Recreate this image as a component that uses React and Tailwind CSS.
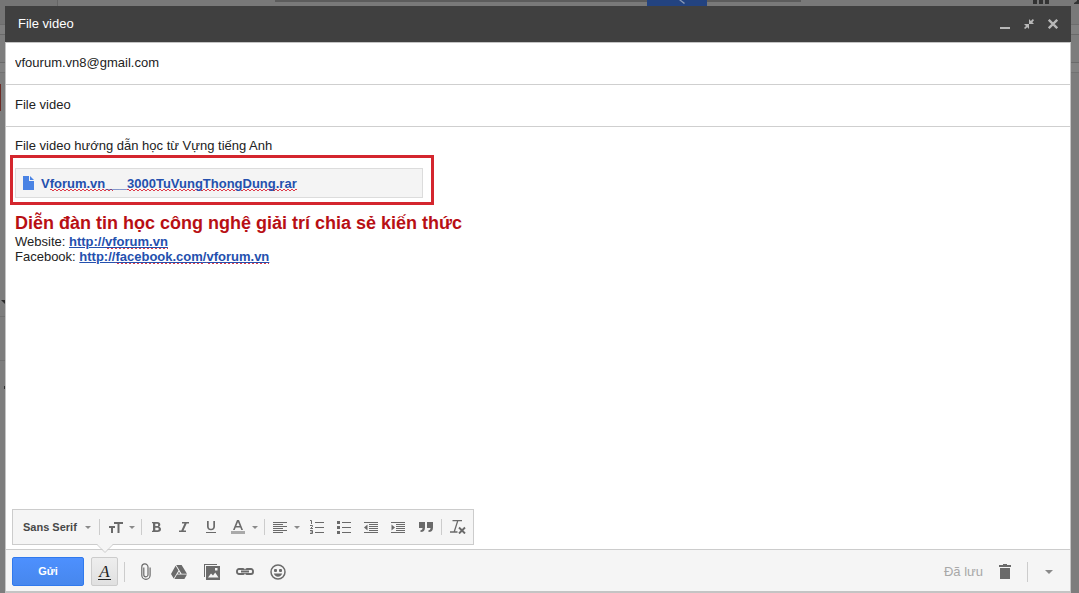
import React from "react";

const squiggle =
  "[background-image:linear-gradient(90deg,#dc3a4a_50%,transparent_50%),linear-gradient(90deg,transparent_50%,#dc3a4a_50%)] [background-size:4px_1px,4px_1px] [background-position:0_13px,0_14px] [background-repeat:repeat-x]";

function Svg({ w, h, children, className = "" }) {
  return (
    <svg
      width={w}
      height={h}
      viewBox={`0 0 ${w} ${h}`}
      fill="currentColor"
      aria-hidden="true"
      className={`block shrink-0 ${className}`}
    >
      {children}
    </svg>
  );
}

const Caret = () => (
  <Svg w={6} h={3} className="text-[#8a8a8a]">
    <path d="M0 0h6L3 3z" />
  </Svg>
);

const Lines = ({ rows }) =>
  rows.map(([x, y, w], i) => <rect key={i} x={x} y={y} width={w} height="1" />);

const Separator = () => <span className="h-4 w-px shrink-0 bg-[#cccccc]" />;

function Tool({ label, className = "w-[27px] justify-center", children }) {
  return (
    <button type="button" aria-label={label} className={`flex h-8 shrink-0 items-center ${className}`}>
      {children}
    </button>
  );
}

function PageBehind() {
  return (
    <div className="absolute inset-0 overflow-hidden bg-[#7d7d7d]" aria-hidden="true">
      <div className="h-[25px] border-b border-[#6d6d6d] bg-[#797979]">
        <div className="h-full w-[58px] border-r border-[#666666] bg-[#757575]" />
      </div>
      <div className="h-[10px] border-b border-[#6a6a6a] bg-[#808080]" />
      <div className="h-[28px] border-b border-[#6a6a6a]" />
      <div className="h-[10px] border-b border-[#727272] bg-[#828282]" />
      <div className="mt-[11px] h-[27px] w-px bg-[#6b2a25]" />
      <div className="mt-[205px] h-[45px] w-[5px] border-y border-[#707070]" />
      <div className="absolute left-[275px] top-0 h-[2px] w-[526px] bg-[#5c5c5c]" />
      <div className="absolute left-[647px] top-0 h-[6px] w-[60px] bg-[#234380]">
        <Svg w={6} h={4} className="ml-8 text-[#8b9ab5]">
          <path d="M0 0h2l4 3-1 1z" />
        </Svg>
      </div>
      <div className="absolute right-[30px] top-0 flex gap-[2px]">
        <i className="size-1 bg-[#333333]" />
        <i className="size-1 bg-[#333333]" />
        <i className="size-1 bg-[#333333]" />
      </div>
      <Svg w={5} h={4} className="absolute right-0 top-0 text-[#333333]">
        <path d="M0 4V3l3-2V0h2v4z" />
      </Svg>
      <Svg w={4} h={4} className="absolute left-[1px] top-[300px] text-[#2c2c2c]">
        <path d="M0 0h4v4z" />
      </Svg>
      <Svg w={1} h={3} className="absolute left-[4px] top-[386px] text-[#2c2c2c]">
        <path d="M0 0h1v3H0z" />
      </Svg>
    </div>
  );
}

function TitleBar() {
  return (
    <header className="flex h-9 items-center bg-[#404040] pl-[13px] pr-[6px] text-[#b8b8b8]">
      <h1 className="flex-1 text-[13px] text-white">File video</h1>
      <Tool label="Minimize" className="w-6 justify-center">
        <Svg w={10} h={10}>
          <path d="M0 8h10v2H0z" />
        </Svg>
      </Tool>
      <Tool label="Exit full screen" className="w-6 justify-center">
        <Svg w={10} h={10}>
          <path d="M5 0v5h5L8.300 3.300 10 1.300 8.900 0 6.800 2zM0 5h5v5L3.300 8.300 1.200 10 0 8.900l2-2z" />
        </Svg>
      </Tool>
      <Tool label="Close" className="w-6 justify-center">
        <Svg w={10} h={10}>
          <path d="M.8.8l8.400 8.400M9.200.8L.8 9.200" stroke="currentColor" strokeWidth="2.300" />
        </Svg>
      </Tool>
    </header>
  );
}

const link = "font-bold text-[#2450ae] underline decoration-1 underline-offset-1";

function Message() {
  return (
    <div
      role="textbox"
      aria-label="Message body"
      aria-multiline="true"
      contentEditable
      suppressContentEditableWarning
      spellCheck={false}
      className="flex-1 px-[9px] pt-[11px] leading-[15px] outline-none"
    >
      <p>File video hướng dẫn học từ Vựng tiếng Anh</p>
      <div className="-ml-[5px] mt-[2px] w-[424px] max-w-full border-[3px] border-[#d4262e] pb-1 pl-[2px] pr-2 pt-[10px]">
        <a
          href="#attachment"
          className="flex h-[30px] items-center gap-[7px] border border-[#dcdcdc] bg-[#f4f4f4] pl-[7px] font-bold text-[#2450ae]"
        >
          <Svg w={11} h={14} className="text-[#4a83e4]">
            <path d="M0 0h6v5h5v9H0zM7 0l4 4H7z" />
          </Svg>
          <span className="pt-px">
            V<span className={squiggle}>forum.vn_</span>__
            <span className={squiggle}>3000TuVungThongDung.rar</span>
          </span>
        </a>
      </div>
      <p className="mt-[7px] text-[18px] font-bold leading-[22px] text-[#b80f14]">
        Diễn đàn tin học công nghệ giải trí chia sẻ kiến thức
      </p>
      <p>
        Website:{" "}
        <a href="http://vforum.vn" className={link}>
          http://<span className={squiggle}>vforum.vn</span>
        </a>
      </p>
      <p>
        Facebook:{" "}
        <a href="http://facebook.com/vforum.vn" className={link}>
          http://<span className={squiggle}>facebook.com</span>/<span className={squiggle}>vforum.vn</span>
        </a>
      </p>
    </div>
  );
}

function FormatBar() {
  return (
    <div
      role="toolbar"
      aria-label="Formatting"
      className="relative mb-1 ml-[6px] flex h-9 items-center self-start border border-[#cccccc] bg-[#f5f5f5] text-[#6a6a6a]"
    >
      <div className="flex w-[86px] items-center">
        <select
          aria-label="Font"
          className="h-8 flex-1 appearance-none bg-transparent pl-[10px] text-[11px] font-bold text-[#484848] outline-none"
        >
          <option>Sans Serif</option>
          <option>Serif</option>
        </select>
        <span className="pr-2">
          <Caret />
        </span>
      </div>
      <Separator />
      <Tool label="Size" className="w-[41px] gap-[6px] pl-[9px]">
        <Svg w={14} h={11}>
          <path d="M5 0h9v2h-3.500v9h-2V2H5zM0 4h6v2H4v5H2V6H0z" />
        </Svg>
        <Caret />
      </Tool>
      <Separator />
      <span className="w-px" />
      <Tool label="Bold">
        <Svg w={9} h={10}>
          <path
            fillRule="evenodd"
            d="M0 0h5.200C7.300 0 8.300 1 8.300 2.600c0 1-.5 1.700-1.300 2.100C8.200 5 9 5.900 9 7.200 9 9 7.700 10 5.600 10H0V8.700h1V1.300H0zM3.300 1.700v2.400H5c.8 0 1.200-.4 1.200-1.200S5.800 1.700 5 1.700zM3.300 5.800v2.500h2c.9 0 1.400-.5 1.400-1.300s-.5-1.200-1.400-1.200z"
          />
        </Svg>
      </Tool>
      <Tool label="Italic">
        <Svg w={10} h={10}>
          <path d="M3 0h7v1.500H7.700L4.500 8.500H7V10H0V8.500h2.300l3.200-7H3z" />
        </Svg>
      </Tool>
      <Tool label="Underline">
        <Svg w={10} h={12}>
          <path d="M1 0h1.700v5.500c0 1.500.8 2.300 2.300 2.300s2.300-.8 2.300-2.300V0H9v5.600C9 8 7.500 9.300 5 9.300S1 8 1 5.600zM0 11h10v1H0z" />
        </Svg>
      </Tool>
      <Tool label="Text color" className="w-10 gap-[7px] pl-[7px]">
        <Svg w={14} h={14}>
          <path fillRule="evenodd" d="M6 0h2l4 10h-1.700L9.300 7.400H4.700L3.700 10H2zM7 1.900L5.300 6h3.400z" />
          <path d="M0 11h14v3H0z" fill="#aaaaaa" />
        </Svg>
        <Caret />
      </Tool>
      <Separator />
      <Tool label="Align" className="w-[38px] gap-[7px] pl-2">
        <Svg w={14} h={11}>
          <Lines rows={[[0, 0, 14], [0, 2, 10], [0, 4, 14], [0, 6, 10], [0, 8, 14], [0, 10, 10]]} />
        </Svg>
        <Caret />
      </Tool>
      <Tool label="Numbered list">
        <Svg w={14} h={14}>
          <Lines rows={[[5, 2, 9], [5, 7, 9], [5, 12, 9]]} />
          <path
            d="M0 .5h1.500V4M0 5.500h2.500v1L.5 8.500h2.500M0 10.500h2.500v3H0M.5 12h2"
            fill="none"
            stroke="currentColor"
          />
        </Svg>
      </Tool>
      <Tool label="Bulleted list">
        <Svg w={14} h={14}>
          <Lines rows={[[5, 2, 9], [5, 7, 9], [5, 12, 9]]} />
          <path d="M0 1h3v3H0zM0 6h3v3H0zM0 11h3v3H0z" />
        </Svg>
      </Tool>
      <Tool label="Indent less">
        <Svg w={14} h={11}>
          <Lines rows={[[0, 0, 14], [5, 2, 9], [5, 4, 9], [5, 6, 9], [5, 8, 9], [0, 10, 14]]} />
          <path d="M3.500 2.500v6L0 5.500z" />
        </Svg>
      </Tool>
      <Tool label="Indent more">
        <Svg w={14} h={11}>
          <Lines rows={[[0, 0, 14], [5, 2, 9], [5, 4, 9], [5, 6, 9], [5, 8, 9], [0, 10, 14]]} />
          <path d="M.5 2.500v6L4 5.500z" />
        </Svg>
      </Tool>
      <Tool label="Quote" className="w-[30px] justify-center">
        <Svg w={14} h={10}>
          <path d="M0 0h6v5.500C6 8.500 4.500 10 1.500 10V8.200c1.500 0 2-.8 2-2.200H0zM8 0h6v5.500C14 8.500 12.500 10 9.500 10V8.200c1.500 0 2-.8 2-2.200H8z" />
        </Svg>
      </Tool>
      <Separator />
      <Tool label="Remove formatting" className="w-[31px] justify-center">
        <Svg w={16} h={14}>
          <path
            d="M2.500.6H12M7.800.6L4.300 11.500M0 12h7.500"
            fill="none"
            stroke="currentColor"
            strokeWidth="1.300"
          />
          <path d="M9 7.500l6 6M15 7.500l-6 6" stroke="currentColor" strokeWidth="1.900" />
        </Svg>
      </Tool>
      <svg
        width="16"
        height="9"
        viewBox="0 0 16 9"
        aria-hidden="true"
        className="absolute left-[84px] top-[34px] z-10"
      >
        <path d="M0 0l8 8 8-8z" fill="#f5f5f5" />
        <path d="M0 .5l8 8 8-8" fill="none" stroke="#cccccc" />
      </svg>
    </div>
  );
}

function ActionBar() {
  return (
    <footer className="flex h-[42px] items-center border-t border-[#cccccc] bg-[#f5f5f5] pl-[6px] pt-[2px] text-[#6a6a6a]">
      <button
        type="button"
        className="h-[29px] w-[72px] rounded-[2px] border border-[#3079ed] bg-gradient-to-b from-[#4d90fe] to-[#4787ed] text-[11px] font-bold text-white"
      >
        Gửi
      </button>
      <button
        type="button"
        aria-label="Formatting options"
        className="ml-[7px] flex h-[29px] w-[27px] items-center justify-center rounded-[2px] border border-[#cccccc] bg-gradient-to-b from-[#eeeeee] to-[#e0e0e0]"
      >
        <span className="border-b border-[#222222] px-px font-['Liberation_Serif',serif] text-[17px] italic leading-[15px] text-[#222222]">
          A
        </span>
      </button>
      <span className="ml-[6px] mr-1 h-5 w-px bg-[#cccccc]" />
      <Tool label="Attach files" className="w-[33px] justify-center">
        <Svg w={10} h={17}>
          <path
            d="M2.800 4.500v7.200a2.100 2.100 0 004.200 0V4A3.100 3.100 0 00.8 4v8.200a4.100 4.100 0 008.300 0V4.500"
            fill="none"
            stroke="currentColor"
            strokeWidth="1.200"
          />
        </Svg>
      </Tool>
      <Tool label="Insert from Drive" className="w-[33px] justify-center">
        <Svg w={16} h={14}>
          <path d="M5.200 0h5.400L16 8.700h-5.400zM4.600.8L7.500 5.500 2.700 13.600 0 9zM6 9.500h10L13.400 14H3.400zM8 6.500l1.300 2.200H6.700z" />
        </Svg>
      </Tool>
      <Tool label="Insert photo" className="w-[33px] justify-center">
        <Svg w={16} h={16}>
          <path d="M0 0h13v1H1v12H0z" />
          <path fillRule="evenodd" d="M2 2h14v14H2zM4 13.500h10.500l-3.300-5-2.200 3-2-2zM11 4v2.500h2.500V4z" />
        </Svg>
      </Tool>
      <Tool label="Insert link" className="w-[33px] justify-center">
        <Svg w={18} h={7}>
          <path
            d="M8 5v.2a1 1 0 01-1 .8H3a2 2 0 01-2-2V3a2 2 0 012-2h4a1 1 0 011 .8V2M10 5v.2a1 1 0 001 .8h4a2 2 0 002-2V3a2 2 0 00-2-2h-4a1 1 0 00-1 .8V2M5 3.500h8"
            fill="none"
            stroke="currentColor"
            strokeWidth="1.900"
          />
        </Svg>
      </Tool>
      <Tool label="Insert emoji" className="w-[33px] justify-center">
        <Svg w={16} h={16}>
          <circle cx="8" cy="8" r="7" fill="none" stroke="currentColor" strokeWidth="1.500" />
          <rect x="4" y="5" width="3" height="3" rx="1" />
          <rect x="9" y="5" width="3" height="3" rx="1" />
          <path d="M3.800 9.500h8.400c-.6 2-2.200 3.200-4.200 3.200s-3.600-1.200-4.200-3.200z" />
        </Svg>
      </Tool>
      <span className="ml-auto text-[13px] text-[#a8a8a8]">Đã lưu</span>
      <Tool label="Discard draft" className="ml-[6px] w-8 justify-center">
        <Svg w={12} h={15}>
          <path d="M4 0h4v1h4v2H0V1h4zM1 4h10v11H1z" />
        </Svg>
      </Tool>
      <span className="ml-[6px] h-5 w-px bg-[#cccccc]" />
      <Tool label="More options" className="w-[42px] justify-center">
        <Svg w={8} h={4} className="text-[#8a8a8a]">
          <path d="M0 0h8L4 4z" />
        </Svg>
      </Tool>
    </footer>
  );
}

const field = "block h-[42px] w-full border-b border-[#cfcfcf] bg-white px-[9px] pb-[2px] outline-none";

export default function App() {
  return (
    <div className="relative flex min-h-screen flex-col bg-[#7d7d7d] pl-[5px] pr-2 pt-[6px] font-['Liberation_Sans',Arial,sans-serif] text-[13px] text-[#222222]">
      <PageBehind />
      <main className="relative flex flex-1 flex-col">
        <TitleBar />
        <form
          className="flex flex-1 flex-col border border-b-2 border-[#c4c4c4] bg-white"
          onSubmit={(e) => e.preventDefault()}
        >
          <input aria-label="To" type="email" defaultValue="vfourum.vn8@gmail.com" className={field} />
          <input aria-label="Subject" type="text" defaultValue="File video" className={field} />
          <Message />
          <FormatBar />
          <ActionBar />
        </form>
      </main>
    </div>
  );
}
